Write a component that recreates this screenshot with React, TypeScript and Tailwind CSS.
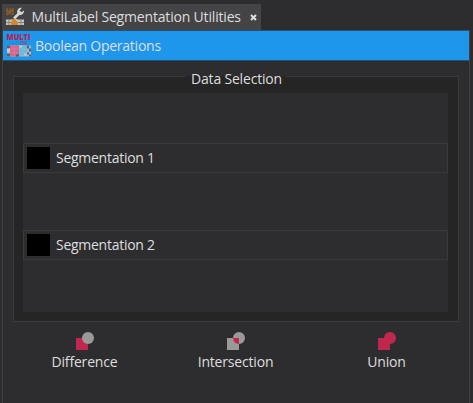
import React from "react";

const RED = "#c0274e";
const GRAY = "#999999";

function ToolsIcon() {
  return (
    <svg width="19" height="19" viewBox="0 0 19 19" className="mt-[-2px] shrink-0">
      <path d="M1 1V8M4 1V5M7 1V8M1 3L4 5.500L7 2M1 8L4 5.500L6 8" stroke="#936022" strokeWidth="1.200" fill="none" />
      <path d="M8 11.500L14 5.500" stroke="#d9d7d3" strokeWidth="2.600" />
      <path d="M16 .8A4 4 0 0 0 11.300 5.800L13.600 8A4 4 0 0 0 18 3.500L15.500 5.300L13.600 3.500Z" fill="#d9d7d3" />
      <path d="M0 12.500H6L9 11.500L12 12.500H18V18H0Z" fill="#c9c4bb" />
      <path d="M0 15.500H18M3 12.500V18M15 12.500V18" stroke="#85817c" strokeWidth="1" />
      <path d="M7 12H9L12 16V18H5V16Z" fill="#d38729" />
    </svg>
  );
}

function MultiIcon() {
  return (
    <svg width="25" height="27" viewBox="0 0 25 27" className="shrink-0 overflow-visible">
      <text x="-.5" y="7.500" textLength="24" lengthAdjust="spacingAndGlyphs" fontFamily="Open Sans, sans-serif" fontWeight="800" fontSize="9.500" letterSpacing="0" fill="#b52352">MULTI</text>
      <text x="1" y="12.500" textLength="11" lengthAdjust="spacingAndGlyphs" fontFamily="Open Sans, sans-serif" fontWeight="700" fontSize="5" letterSpacing="0" fill="#1690df">AND</text>
      <text x="13" y="12.500" textLength="8" lengthAdjust="spacingAndGlyphs" fontFamily="Open Sans, sans-serif" fontWeight="700" fontSize="5" letterSpacing="0" fill="#81508a">OR</text>
      <g transform="translate(0 .5)">
        <rect x="0" y="13" width="24" height="11" fill="#a9b6c1" />
        <rect x="3" y="13" width="9" height="11" fill="#dc638b" />
        <rect x="12" y="13" width="8" height="10" fill="#69badd" />
        <path d="M0 13h3v3H0zM0 21h3v3H0zM9 22h3v2H9zM20 13h2v3h-2zM22 16h2v3h-2zM20 20h2v2h-2zM22 22h2v2h-2z" fill="#55616b" />
        <path d="M0 16h3v4H0zM12 13h3v2h-3zM17 21h3v2h-3z" fill="#c2c9cd" />
        <path d="M3.500 16.500H20M3.500 20H20M7 13V24M16 13V23" stroke="#b9b3c4" strokeOpacity=".35" strokeWidth=".7" />
      </g>
    </svg>
  );
}

function BooleanIcon({ kind }: { kind: string }) {
  const square = kind === "Intersection" ? GRAY : RED;
  const circle = kind === "Union" ? RED : GRAY;
  return (
    <svg width="20" height="20" viewBox="0 0 20 20">
      <rect x="1" y="7" width="12" height="12" fill={square} />
      <circle cx="13" cy="7" r="6" fill={circle} />
      {kind === "Intersection" && <path d="M13 7H7A6 6 0 0 0 13 13Z" fill={RED} />}
    </svg>
  );
}

function SegmentationRow({ label }: { label: string }) {
  return (
    <div className="flex h-[30px] items-center border border-[#3a3a3c] pl-[3px]">
      <div className="h-[22px] w-[23px] bg-black" />
      <span className="ml-[6px] tracking-[-0.27px]">{label}</span>
    </div>
  );
}

export default function App() {
  return (
    <main className="flex h-[403px] w-[473px] flex-col overflow-hidden bg-[#2d2d2f] pt-1 pl-[2px] font-['Open_Sans',sans-serif] text-[14px] leading-[18px] tracking-[-0.18px] text-[#dedede]">
      <div className="flex h-[26px] w-[259px] shrink-0 items-center bg-[#444446] pl-1">
        <ToolsIcon />
        <span className="ml-[6.500px] w-[211px] shrink-0 whitespace-nowrap">MultiLabel Segmentation Utilities</span>
        <svg width="7" height="7" viewBox="0 0 7 7" className="ml-[7px] shrink-0">
          <path d="M1 1L6 6M6 1L1 6" stroke="#dedede" strokeWidth="2" />
        </svg>
      </div>
      <section className="w-[468px] flex-1 border-x border-t border-x-[#414143] border-t-[#255174]">
        <div className="flex h-[30px] items-center border-b border-[#255174] bg-[#1e96eb] pl-[4px]">
          <MultiIcon />
          <span className="mt-[1px] ml-[3px] tracking-[-0.25px]">Boolean Operations</span>
        </div>
        <fieldset className="mx-[10px] mt-[9px] h-[252px] w-[446px] border border-[#3a3a3c] bg-[#252525] pr-[10px] pl-[9px]">
          <legend className="mx-auto h-[13px] pr-[4px] pl-[6px]">Data Selection</legend>
          <div className="mt-[10px] flex h-[219px] flex-col gap-[57px] bg-[#2d2d2f] pt-[50px]">
            <SegmentationRow label="Segmentation 1" />
            <SegmentationRow label="Segmentation 2" />
          </div>
        </fieldset>
        <div className="ml-[6px] mt-[9px] flex">
          {["Difference", "Intersection", "Union"].map((kind) => (
            <button key={kind} className="flex w-[151px] flex-col items-center">
              <BooleanIcon kind={kind} />
              <span className="mt-[1.500px]">{kind}</span>
            </button>
          ))}
        </div>
      </section>
    </main>
  );
}
